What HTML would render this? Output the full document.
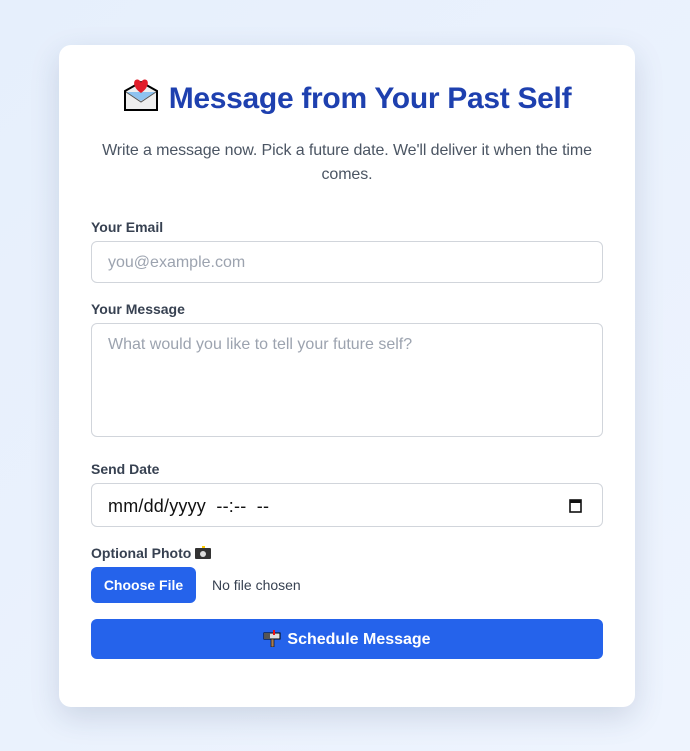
<!DOCTYPE html>
<html><head><meta charset="utf-8"><style>
*{box-sizing:border-box;margin:0;padding:0}
body{width:690px;height:751px;background:linear-gradient(135deg,#e6effc,#eef4fe);font-family:"Liberation Sans",sans-serif;position:relative;overflow:hidden}
.card{position:absolute;left:59px;top:45px;width:576px;height:662px;background:#fff;border-radius:12px;box-shadow:0 10px 30px rgba(30,50,90,.15)}
.a{position:absolute}
h1{position:absolute;left:0;width:576px;top:33px;text-align:center;font-size:30px;font-weight:bold;color:#1e40af;white-space:nowrap;letter-spacing:-0.3px}
.sub{left:32px;width:512px;top:94px;text-align:center;font-size:16px;line-height:24px;color:#4b5563;letter-spacing:-0.1px}
.lbl{font-size:14px;font-weight:bold;color:#374151;left:32px}
.in{left:32px;width:512px;border:1px solid #d1d5db;border-radius:6px;font-size:16px;color:#9ca3af;padding-left:16px}
.btn{background:#2563eb;color:#fff;font-weight:bold;border-radius:6px;text-align:center}
</style></head><body>
<div class="card">
<h1><svg width="36" height="34" viewBox="0 0 36 34" style="vertical-align:-4px;margin-right:10px"><path d="M2 13 L18 4 L34 13 V32 H2 Z" fill="#eee" stroke="#000" stroke-width="2"/><path d="M3 14 L18 23 L33 14" fill="#8ec3f0"/><path d="M18 15 C9 9 10 1 14.5 1.5 C16.5 1.7 18 4 18 5 C18 4 19.5 1.7 21.5 1.5 C26 1 27 9 18 15Z" fill="#e11d2a"/><path d="M3 14 L18 24 L33 14" fill="none" stroke="#555" stroke-width="1"/></svg>Message from Your Past Self</h1>
<div class="a sub">Write a message now. Pick a future date. We'll deliver it when the time comes.</div>
<div class="a lbl" style="top:174px">Your Email</div>
<div class="a in" style="top:196px;height:42px;line-height:42px">you@example.com</div>
<div class="a lbl" style="top:256px">Your Message</div>
<div class="a in" style="top:278px;height:114px;padding-top:12px">What would you like to tell your future self?</div>
<div class="a lbl" style="top:416px">Send Date</div>
<div class="a in" style="top:438px;height:44px;line-height:44px;color:#111;font-size:18px;letter-spacing:0.2px">mm/dd/yyyy&nbsp; --:--&nbsp; --<svg class="a" style="right:20px;top:14px" width="13" height="15" viewBox="0 0 13 15"><rect x="1" y="2" width="11" height="12" fill="none" stroke="#111" stroke-width="1.6"/><rect x="1" y="2" width="11" height="3" fill="#111"/></svg></div>
<div class="a lbl" style="top:500px">Optional Photo <svg width="16" height="13" viewBox="0 0 16 13" style="vertical-align:-1px"><rect x="0" y="2" width="16" height="11" rx="1" fill="#333"/><circle cx="8" cy="8" r="3" fill="#ddd"/><rect x="7" y="0" width="3" height="2" fill="#fc0"/></svg></div>
<div class="a btn" style="left:32px;top:522px;width:105px;height:36px;line-height:36px;font-size:14px">Choose File</div>
<div class="a" style="left:153px;top:522px;line-height:36px;font-size:14px;color:#374151">No file chosen</div>
<div class="a btn" style="left:32px;top:574px;width:512px;height:40px;line-height:42px;font-size:16px"><svg width="18" height="18" viewBox="0 0 18 18" style="vertical-align:-3px;margin-right:6px"><path d="M1 4 H17 V10 H1 Z" fill="#ddd" stroke="#000" stroke-width="1"/><rect x="1" y="4" width="6" height="6" fill="#555"/><rect x="10" y="1" width="2" height="5" fill="#e11"/><rect x="8" y="10" width="3" height="8" fill="#a67c52" stroke="#000" stroke-width=".6"/></svg>Schedule Message</div>
</div>
</body></html>
